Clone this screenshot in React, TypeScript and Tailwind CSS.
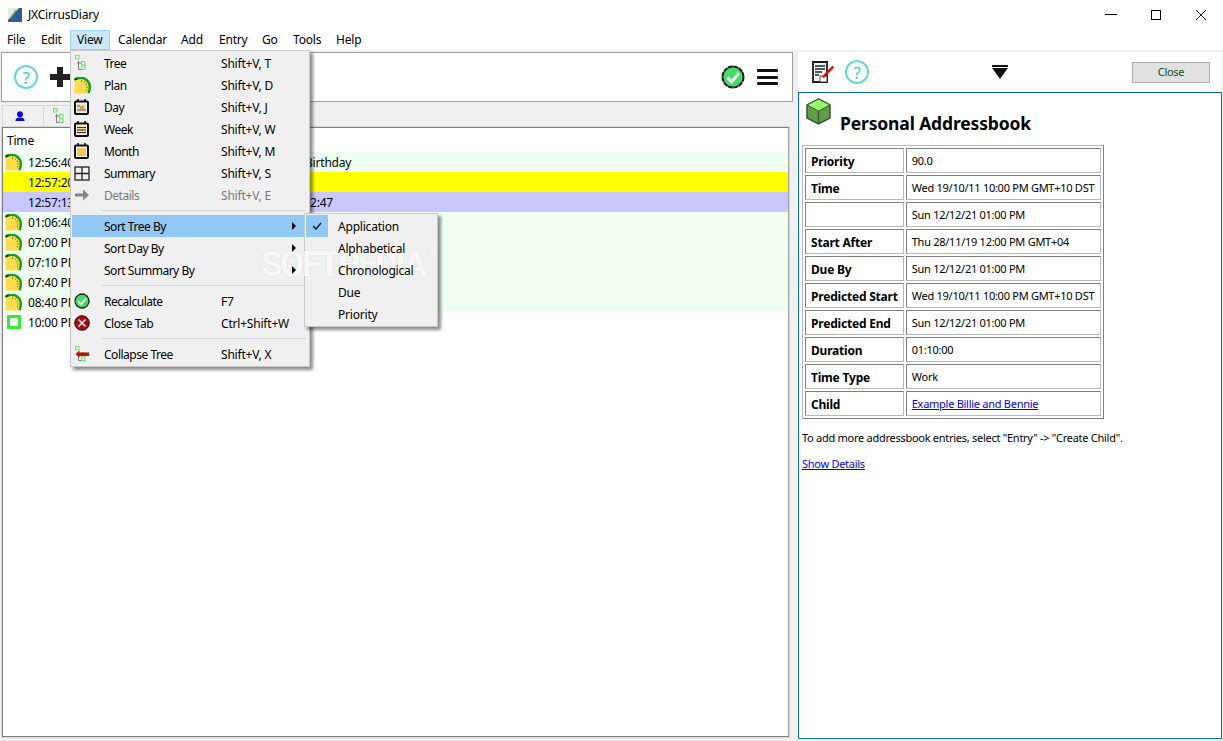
const FONT = "font-['Noto_Sans','Open_Sans',sans-serif]";

function TreeIcon({ arrow }: { arrow?: boolean }) {
  return (
    <svg width="18" height="18" viewBox="0 0 18 18" fill="none">
      <rect x="1.500" y="1.500" width="3.500" height="3.500" stroke="#62ec62" />
      <path d="M4.500 7v8.500h3M3 9h4" stroke="#7c7c7c" />
      <rect x="7.500" y="7.500" width="3.500" height="3.500" stroke="#62ec62" />
      <rect x="7.500" y="12" width="3.500" height="3.500" stroke="#62ec62" />
      {arrow && <path d="M1.500 9l4-3.500v2h9.500v3.500H5.500v1.500z" fill="#c01010" />}
    </svg>
  );
}

function ClockIcon() {
  return (
    <svg width="17" height="17" viewBox="0 0 17 17">
      <path d="M0.500 2h7.500a8 8 0 0 1 8.500 8c0 2.500-0.800 5-1.500 6.500H0.500z" fill="#ffdd4a" />
      <path d="M0.500 2.500c2-1.200 4-1.700 6-1.700a9 9 0 0 1 9.300 9.300c0 2.200-0.500 4.400-1.300 6" stroke="#0aa51c" strokeWidth="2.400" fill="none" />
      <path d="M0.500 3l3-1.600" stroke="#1d1d1d" strokeWidth="1.200" />
      <path d="M7.500 3.500v1.200M11 4.500l-0.700 1M13.500 10h-1.200M13 13l-1-0.600M12.800 7l-1.100 0.500" stroke="#2b2b2b" strokeWidth="0.900" />
    </svg>
  );
}

function CalIcon({ kind }: { kind: 'day' | 'week' | 'month' }) {
  return (
    <svg width="15" height="16" viewBox="0 0 15 16">
      <rect x="1" y="2.500" width="13" height="12.500" rx="1" fill="#f0f0f0" stroke="#111" strokeWidth="2" />
      <path d="M4 0v3M11 0v3" stroke="#111" strokeWidth="1.600" />
      {kind === 'day' && (
        <>
          <rect x="3" y="5" width="9" height="8" fill="#ddd" />
          <rect x="6" y="7" width="4" height="3" fill="#e8a020" />
          <path d="M3 7h3M3 11h9" stroke="#555" />
        </>
      )}
      {kind === 'week' && (
        <>
          <rect x="3" y="5" width="9" height="8" fill="#f5d890" />
          <path d="M3 6.500h9M3 9h9M3 11.500h9" stroke="#333" />
        </>
      )}
      {kind === 'month' && <rect x="3" y="5" width="9" height="8" fill="#f7c65a" />}
    </svg>
  );
}

function GridIcon() {
  return (
    <svg width="16" height="15" viewBox="0 0 16 15" fill="none" stroke="#222" strokeWidth="1.300">
      <rect x="1" y="1" width="14" height="13" />
      <path d="M8 1v13M1 7.500h14" />
    </svg>
  );
}

function ArrowIcon() {
  return (
    <svg width="16" height="14" viewBox="0 0 16 14">
      <path d="M1 5.500h8V1.500l6 5.500-6 5.500V8.500H1z" fill="#858585" />
    </svg>
  );
}

function CheckBall({ size = 16 }: { size?: number }) {
  return (
    <svg width={size} height={size} viewBox="0 0 24 24">
      <circle cx="12" cy="12" r="10.500" fill="#43dc66" stroke="#161616" strokeWidth="2" strokeDasharray="5 0.500" />
      <path d="M6.500 12.500l4 4.500 7.500-9" fill="none" stroke="#f4fff4" strokeWidth="3" />
    </svg>
  );
}

function CloseBall() {
  return (
    <svg width="16" height="16" viewBox="0 0 16 16">
      <circle cx="8" cy="8" r="7.300" fill="#a80f14" stroke="#2e0808" />
      <path d="M4.500 4.500l7 7M11.500 4.500l-7 7" stroke="#f2f2f2" strokeWidth="1.500" />
    </svg>
  );
}

function HelpIcon() {
  return (
    <div className="flex h-[24px] w-[24px] items-center justify-center rounded-full border-2 border-[#62d8de] text-[17px] leading-none text-[#46c8d4]">
      ?
    </div>
  );
}

function UserIcon() {
  return (
    <svg width="10" height="10" viewBox="0 0 10 10" fill="#0a0ad8">
      <circle cx="5" cy="3.300" r="3" />
      <path d="M0.500 10c0-3 2-3.500 4.500-3.500s4.500 0.500 4.500 3.500z" />
    </svg>
  );
}

function CubeIcon() {
  return (
    <svg width="25" height="27" viewBox="0 0 25 27">
      <path d="M12.500 1L24 7v13l-11.500 6L1 20V7z" fill="#5f9e4a" stroke="#39572f" strokeWidth="1.500" />
      <path d="M12.500 1L24 7l-11.500 6L1 7z" fill="#8fff70" stroke="#39572f" strokeWidth="1" />
      <path d="M12.500 13v13" stroke="#39572f" strokeWidth="1.200" />
    </svg>
  );
}

function NoteIcon() {
  return (
    <svg width="23" height="23" viewBox="0 0 23 23">
      <path d="M1 1h14v20H1z" fill="#f4f4f4" stroke="#1c1c1c" strokeWidth="1.800" />
      <path d="M3 5h10M3 8h10M3 11h7M3 14h4" stroke="#222" strokeWidth="1.300" />
      <path d="M8 15h7v6H8z" fill="#fff" stroke="#222" strokeWidth="0.800" />
      <path d="M10 15.500L20.500 4.500l1.500 2L12 17z" fill="#e01010" />
    </svg>
  );
}

const menuBar = [
  { label: 'File', cls: 'w-[34px] pl-[7px]' },
  { label: 'Edit', cls: 'w-[36px] pl-[7px]' },
  { label: 'View', cls: 'w-[40px] pl-[6px] bg-[#cce8ff] border border-[#99d1ff]' },
  { label: 'Calendar', cls: 'w-[63px] pl-[8px]' },
  { label: 'Add', cls: 'w-[38px] pl-[8px]' },
  { label: 'Entry', cls: 'w-[43px] pl-[8px]' },
  { label: 'Go', cls: 'w-[31px] pl-[8px]' },
  { label: 'Tools', cls: 'w-[43px] pl-[8px]' },
  { label: 'Help', cls: 'w-[44px] pl-[8px]' },
];

const treeRows = [
  { time: '12:56:40 PM', icon: <ClockIcon />, bg: 'bg-[#effff0]', text: 'Birthday', textCls: 'pl-[197px]' },
  { time: '12:57:20 PM', icon: null, bg: 'bg-[#ffff00]', text: '', textCls: '' },
  { time: '12:57:13 PM', icon: null, bg: 'bg-[#c8c8ff]', text: '00:02:47', textCls: 'pl-[179px]' },
  { time: '01:06:40 PM', icon: <ClockIcon />, bg: 'bg-[#effff0]', text: '', textCls: '' },
  { time: '07:00 PM', icon: <ClockIcon />, bg: 'bg-[#effff0]', text: '', textCls: '' },
  { time: '07:10 PM', icon: <ClockIcon />, bg: 'bg-[#effff0]', text: '', textCls: '' },
  { time: '07:40 PM', icon: <ClockIcon />, bg: 'bg-[#effff0]', text: '', textCls: '' },
  { time: '08:40 PM', icon: <ClockIcon />, bg: 'bg-[#effff0]', text: '', textCls: '' },
  {
    time: '10:00 PM',
    icon: <div className="ml-[2px] h-[14px] w-[14px] border-[3px] border-[#33f033] bg-white" />,
    bg: 'bg-white',
    text: '',
    textCls: '',
  },
];

function MenuItem({
  icon,
  label,
  shortcut,
  active,
  disabled,
  sub,
}: {
  icon?: React.ReactNode;
  label: string;
  shortcut?: string;
  active?: boolean;
  disabled?: boolean;
  sub?: boolean;
}) {
  return (
    <div
      className={`relative flex h-[22px] items-center ${active ? 'bg-[#90c8f6]' : ''} ${disabled ? 'text-[#7a7a7a]' : 'text-black'}`}
    >
      <div className="flex w-[32px] items-center justify-start pl-[2px]">{icon}</div>
      <div className="relative z-50 w-[117px] whitespace-nowrap pt-[2px] tracking-[-0.48px]">{label}</div>
      <div className="relative z-50 whitespace-nowrap pt-[2px]">{shortcut}</div>
      {sub && (
        <div className="absolute right-[12px] top-[7px] z-50 h-0 w-0 border-y-[4px] border-l-[4px] border-y-transparent border-l-black" />
      )}
    </div>
  );
}

function MenuSep() {
  return <div className="ml-[30px] mr-[2px] mt-[4px] mb-[4px] h-px bg-[#d5d5d5]" />;
}

function ViewMenu() {
  return (
    <div className="absolute left-[70px] top-[50px] w-[240px] border border-[#c8c8c8] bg-[#f0f0f0] p-[1px] shadow-[3px_3px_3px_rgba(0,0,0,0.45)]">
      <MenuItem icon={<TreeIcon />} label="Tree" shortcut="Shift+V, T" />
      <MenuItem icon={<ClockIcon />} label="Plan" shortcut="Shift+V, D" />
      <MenuItem icon={<CalIcon kind="day" />} label="Day" shortcut="Shift+V, J" />
      <MenuItem icon={<CalIcon kind="week" />} label="Week" shortcut="Shift+V, W" />
      <MenuItem icon={<CalIcon kind="month" />} label="Month" shortcut="Shift+V, M" />
      <MenuItem icon={<GridIcon />} label="Summary" shortcut="Shift+V, S" />
      <MenuItem icon={<ArrowIcon />} label="Details" shortcut="Shift+V, E" disabled />
      <MenuSep />
      <MenuItem label="Sort Tree By" active sub />
      <MenuItem label="Sort Day By" sub />
      <MenuItem label="Sort Summary By" sub />
      <MenuSep />
      <MenuItem icon={<CheckBall />} label="Recalculate" shortcut="F7" />
      <MenuItem icon={<CloseBall />} label="Close Tab" shortcut="Ctrl+Shift+W" />
      <MenuSep />
      <MenuItem icon={<TreeIcon arrow />} label="Collapse Tree" shortcut="Shift+V, X" />
    </div>
  );
}

function SortMenu() {
  const items = ['Application', 'Alphabetical', 'Chronological', 'Due', 'Priority'];
  return (
    <div className="absolute left-[304px] top-[213px] w-[134px] border border-[#c8c8c8] bg-[#f0f0f0] p-[1px] shadow-[3px_3px_3px_rgba(0,0,0,0.45)]">
      {items.map((item, i) => (
        <div key={item} className="flex h-[22px] items-center">
          <div className={`mr-[10px] flex h-[22px] w-[22px] items-center justify-center ${i === 0 ? 'bg-[#90c8f6]' : ''}`}>
            {i === 0 && (
              <svg width="10" height="8" viewBox="0 0 10 8" fill="none" stroke="#222" strokeWidth="1.500">
                <path d="M1 4l3 3 5-6" />
              </svg>
            )}
          </div>
          <span className="relative z-50 pt-[2px]">{item}</span>
        </div>
      ))}
    </div>
  );
}

const details = [
  { k: 'Priority', v: '90.0' },
  { k: 'Time', v: 'Wed 19/10/11 10:00 PM GMT+10 DST' },
  { k: '', v: 'Sun 12/12/21 01:00 PM' },
  { k: 'Start After', v: 'Thu 28/11/19 12:00 PM GMT+04' },
  { k: 'Due By', v: 'Sun 12/12/21 01:00 PM' },
  { k: 'Predicted Start', v: 'Wed 19/10/11 10:00 PM GMT+10 DST' },
  { k: 'Predicted End', v: 'Sun 12/12/21 01:00 PM' },
  { k: 'Duration', v: '01:10:00' },
  { k: 'Time Type', v: 'Work' },
];

const cellCls =
  'h-[25px] border border-t-[#808080] border-l-[#808080] border-r-[#b8b8b8] border-b-[#b8b8b8] px-[5px] pt-[2px] pb-0';
const valueCls = 'text-[11px] tracking-[-0.27px]';

export default function App() {
  return (
    <div className={`relative flex h-[741px] w-[1223px] flex-col overflow-hidden bg-[#f0f0f0] text-[12px] text-black ${FONT} tracking-[-0.2px]`}>
      {/* title bar */}
      <div className="flex h-[29px] shrink-0 items-center bg-white pl-[8px]">
        <svg width="14" height="14" viewBox="0 0 14 14" className="mr-[6px]">
          <rect width="14" height="14" fill="#2f5f8f" />
          <path d="M0 0h11L0 12z" fill="#e8ecdc" />
          <path d="M2 9l6-8 1 1-6 8z" fill="#8fb06a" />
        </svg>
        <span>JXCirrusDiary</span>
        <div className="ml-auto flex items-center pr-[17px]">
          <div className="mr-[34px] h-px w-[12px] bg-black" />
          <div className="mr-[35px] h-[10px] w-[10px] border border-black" />
          <svg width="10" height="10" viewBox="0 0 10 10" stroke="#111" strokeWidth="1">
            <path d="M0 0l10 10M10 0L0 10" />
          </svg>
        </div>
      </div>

      {/* menu bar */}
      <div className="flex h-[21px] shrink-0 items-center bg-white">
        {menuBar.map((m) => (
          <div key={m.label} className={`flex h-[20px] items-center pt-[1px] ${m.cls}`}>
            {m.label}
          </div>
        ))}
      </div>

      <div className="flex min-h-0 flex-1 pt-[2px]">
        {/* left side */}
        <div className="flex w-[797px] shrink-0 flex-col pl-[1px]">
          <div className="flex h-[50px] w-[792px] shrink-0 items-center border border-[#a0a0a0] bg-white pl-[12px] pr-[14px]">
            <HelpIcon />
            <svg width="20" height="20" viewBox="0 0 20 20" className="ml-[12px]" fill="#222">
              <path d="M7 0h6v7h7v6h-7v7H7v-7H0V7h7z" />
            </svg>
            <div className="ml-auto flex items-center gap-[12px]">
              <CheckBall size={24} />
              <div className="flex h-[16px] w-[21px] flex-col justify-between">
                <div className="h-[3px] rounded-[1px] bg-[#111]" />
                <div className="h-[3px] rounded-[1px] bg-[#111]" />
                <div className="h-[3px] rounded-[1px] bg-[#111]" />
              </div>
            </div>
          </div>

          <div className="mt-[3px] flex h-[21px] shrink-0 pl-[1px]">
            <div className="flex w-[42px] items-center border border-b-0 border-[#d9d9d9] bg-[#f0f0f0] pl-[12px]">
              <UserIcon />
            </div>
            <div className="flex w-[36px] items-center border border-b-0 border-l-0 border-[#d9d9d9] bg-[#f0f0f0] pl-[8px]">
              <TreeIcon />
            </div>
          </div>

          <div className="flex min-h-0 w-[789px] flex-1 flex-col border border-[#d9d9d9] mb-[3px]">
            <div className="flex min-h-0 flex-1 flex-col border border-[#808080] border-r-[#a0a0a0] border-b-[#808080] bg-white">
              <div className="flex h-[24px] shrink-0 items-center pl-[4px] pt-[2px]">Time</div>
              {treeRows.map((r) => (
                <div key={r.time} className={`flex h-[20px] shrink-0 items-center ${r.bg}`}>
                  <div className="flex w-[25px] shrink-0 justify-start pl-[2px]">{r.icon}</div>
                  <span className="w-[80px] shrink-0 whitespace-nowrap pt-[2px]">{r.time}</span>
                  <span className={`whitespace-nowrap pt-[2px] ${r.textCls}`}>{r.text}</span>
                </div>
              ))}
            </div>
          </div>
        </div>

        {/* right side */}
        <div className="flex min-h-0 flex-1 flex-col pl-[1px] pr-[1px]">
          <div className="flex h-[40px] shrink-0 items-center bg-white pr-[12px]">
            <div className="ml-[14px]">
              <NoteIcon />
            </div>
            <div className="ml-[10px]">
              <HelpIcon />
            </div>
            <svg width="16" height="14" viewBox="0 0 16 14" className="ml-[123px]">
              <path d="M0 0h16v2H0zM0 3h16L8 14z" fill="#111" />
            </svg>
            <button className={`ml-auto h-[21px] w-[78px] border border-[#adadad] bg-[#e1e1e1] text-[#0b4f20] ${valueCls}`}>
              Close
            </button>
          </div>
          <div className="mb-[2px] min-h-0 flex-1 border border-[#0a6cc4] bg-white pl-[3px]">
            <div className="flex h-[52px] items-start pl-[4px] pt-[5px]">
              <CubeIcon />
              <div className="ml-[9px] mt-[13px] text-[17.500px] font-bold leading-[24px] tracking-[-0.15px]">
                Personal Addressbook
              </div>
            </div>
            <table className="border-separate border-spacing-[2px] border border-t-[#b8b8b8] border-l-[#b8b8b8] border-r-[#808080] border-b-[#808080]">
              <tbody>
                {details.map((d, i) => (
                  <tr key={i}>
                    <td className={`${cellCls} w-[98px] min-w-[98px] whitespace-nowrap font-bold`}>{d.k}</td>
                    <td className={`${cellCls} ${valueCls} w-[195px] min-w-[195px] whitespace-nowrap`}>{d.v}</td>
                  </tr>
                ))}
                <tr>
                  <td className={`${cellCls} font-bold`}>Child</td>
                  <td className={`${cellCls} ${valueCls}`}>
                    <a className="text-[#0000ff] underline">Example Billie and Bennie</a>
                  </td>
                </tr>
              </tbody>
            </table>
            <p className={`mt-[11px] ${valueCls}`}>To add more addressbook entries, select "Entry" -&gt; "Create Child".</p>
            <p className={`mt-[9px] ${valueCls}`}>
              <a className="text-[#0000ff] underline">Show Details</a>
            </p>
          </div>
        </div>
      </div>

      <ViewMenu />
      <SortMenu />
      <div className="pointer-events-none absolute left-[261px] top-[245px] z-40 flex font-['Roboto',sans-serif] text-[35px] font-bold leading-[40px] tracking-[-2.500px] text-white/80 [text-shadow:0_0_2px_rgba(0,0,0,0.1)]">
        SOFTPEDIA
        <span className="ml-[4px] mt-[1px] text-[9px] leading-[12px] tracking-normal">®</span>
      </div>
    </div>
  );
}
